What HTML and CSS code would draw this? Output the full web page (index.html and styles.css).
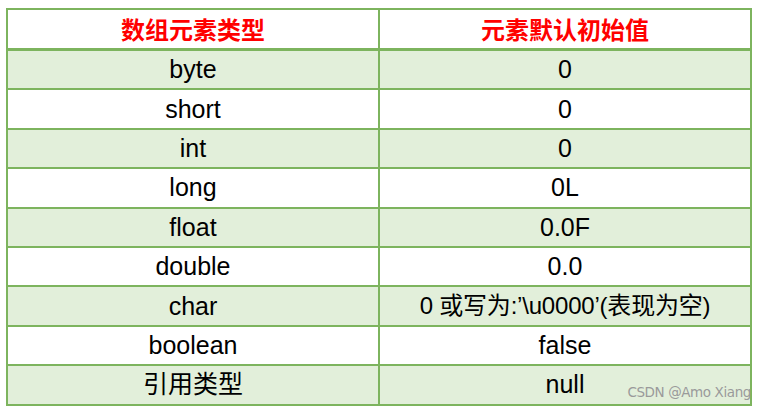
FILE: index.html
```html
<!DOCTYPE html>
<html lang="zh-CN">
<head>
<meta charset="utf-8">
<title>数组元素默认初始值</title>
<link rel="stylesheet" href="styles.css">
</head>
<body>
<div class="wrap">
  <table class="defaults">
    <thead>
      <tr class="head">
        <th>数组元素类型</th>
        <th>元素默认初始值</th>
      </tr>
    </thead>
    <tbody>
      <tr class="shade"><td>byte</td><td>0</td></tr>
      <tr><td>short</td><td>0</td></tr>
      <tr class="shade"><td>int</td><td>0</td></tr>
      <tr><td>long</td><td>0L</td></tr>
      <tr class="shade"><td>float</td><td>0.0F</td></tr>
      <tr><td>double</td><td>0.0</td></tr>
      <tr class="shade"><td>char</td><td class="narrow">0 或写为:’\u0000’(表现为空)</td></tr>
      <tr><td>boolean</td><td>false</td></tr>
      <tr class="shade"><td>引用类型</td><td>null</td></tr>
    </tbody>
  </table>
  <div class="watermark">CSDN @Amo Xiang</div>
</div>
</body>
</html>
```
FILE: styles.css
```css
html, body {
  margin: 0;
  padding: 0;
  background: #ffffff;
}

.wrap {
  position: relative;
  width: 746px;
  margin: 8px 0 0 6px;
}

.defaults {
  width: 746px;
  border-collapse: collapse;
  table-layout: fixed;
  font-family: "Liberation Sans", Arial, "Noto Sans CJK SC", sans-serif;
  color: #000000;
}

.defaults th,
.defaults td {
  border: 2px solid #7db45e;
  text-align: center;
  vertical-align: middle;
  padding: 0;
}

.defaults th {
  height: 38px;
  font-family: "Noto Sans CJK SC", "Microsoft YaHei", sans-serif;
  font-weight: 700;
  font-size: 24px;
  color: #ff0000;
  border-bottom-width: 3px;
  line-height: 1;
}

.defaults td {
  height: 37.4px;
  font-size: 25px;
  line-height: 1;
}

.defaults td.narrow {
  font-size: 24px;
  letter-spacing: -0.2px;
}

.defaults tr.shade td {
  background: #e2efda;
}

.watermark {
  position: absolute;
  right: 1px;
  bottom: 6px;
  font-family: "DejaVu Sans", sans-serif;
  font-size: 13.5px;
  letter-spacing: -0.4px;
  color: #9a9a9a;
  white-space: nowrap;
}
```
